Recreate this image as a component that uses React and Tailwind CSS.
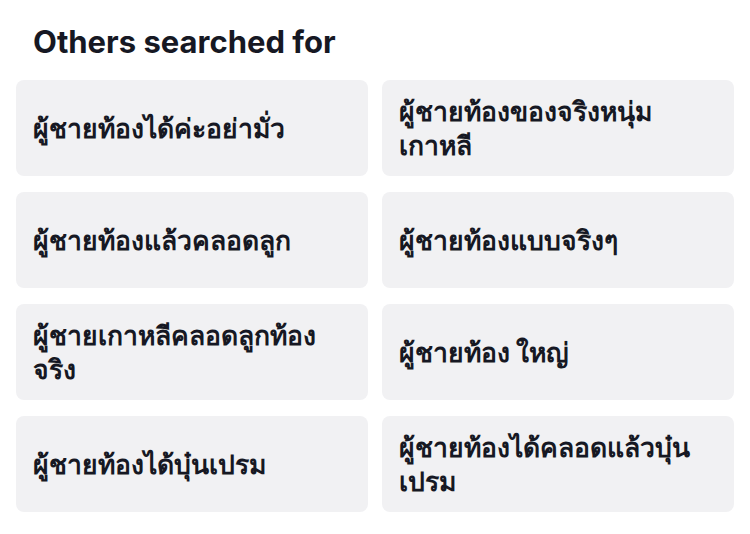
import React from 'react'

const searches = [
  "ผู้ชายท้องได้ค่ะอย่ามั่ว",
  "ผู้ชายท้องของจริงหนุ่มเกาหลี",
  "ผู้ชายท้องแล้วคลอดลูก",
  "ผู้ชายท้องแบบจริงๆ",
  "ผู้ชายเกาหลีคลอดลูกท้องจริง",
  "ผู้ชายท้อง ใหญ่",
  "ผู้ชายท้องได้บุ๋นเปรม",
  "ผู้ชายท้องได้คลอดแล้วบุ๋นเปรม",
]

function App() {
  return (
    <div className="min-h-screen bg-white px-4 pt-[22px] font-['Inter','Noto_Sans','Noto_Sans_CJK_SC',sans-serif] text-[#161823]">
      <h2 className="pl-[17px] text-[31px] font-bold leading-[40px]">
        Others searched for
      </h2>

      <div className="mt-[18px] grid grid-cols-2 gap-x-[14px] gap-y-4">
        {searches.map((s) => (
          <div
            key={s}
            className="flex h-24 items-center rounded-lg bg-[#f1f1f3] px-[17px]"
          >
            <span className="text-[26.5px] font-bold leading-[34px]">{s}</span>
          </div>
        ))}
      </div>
    </div>
  )
}

export default App
